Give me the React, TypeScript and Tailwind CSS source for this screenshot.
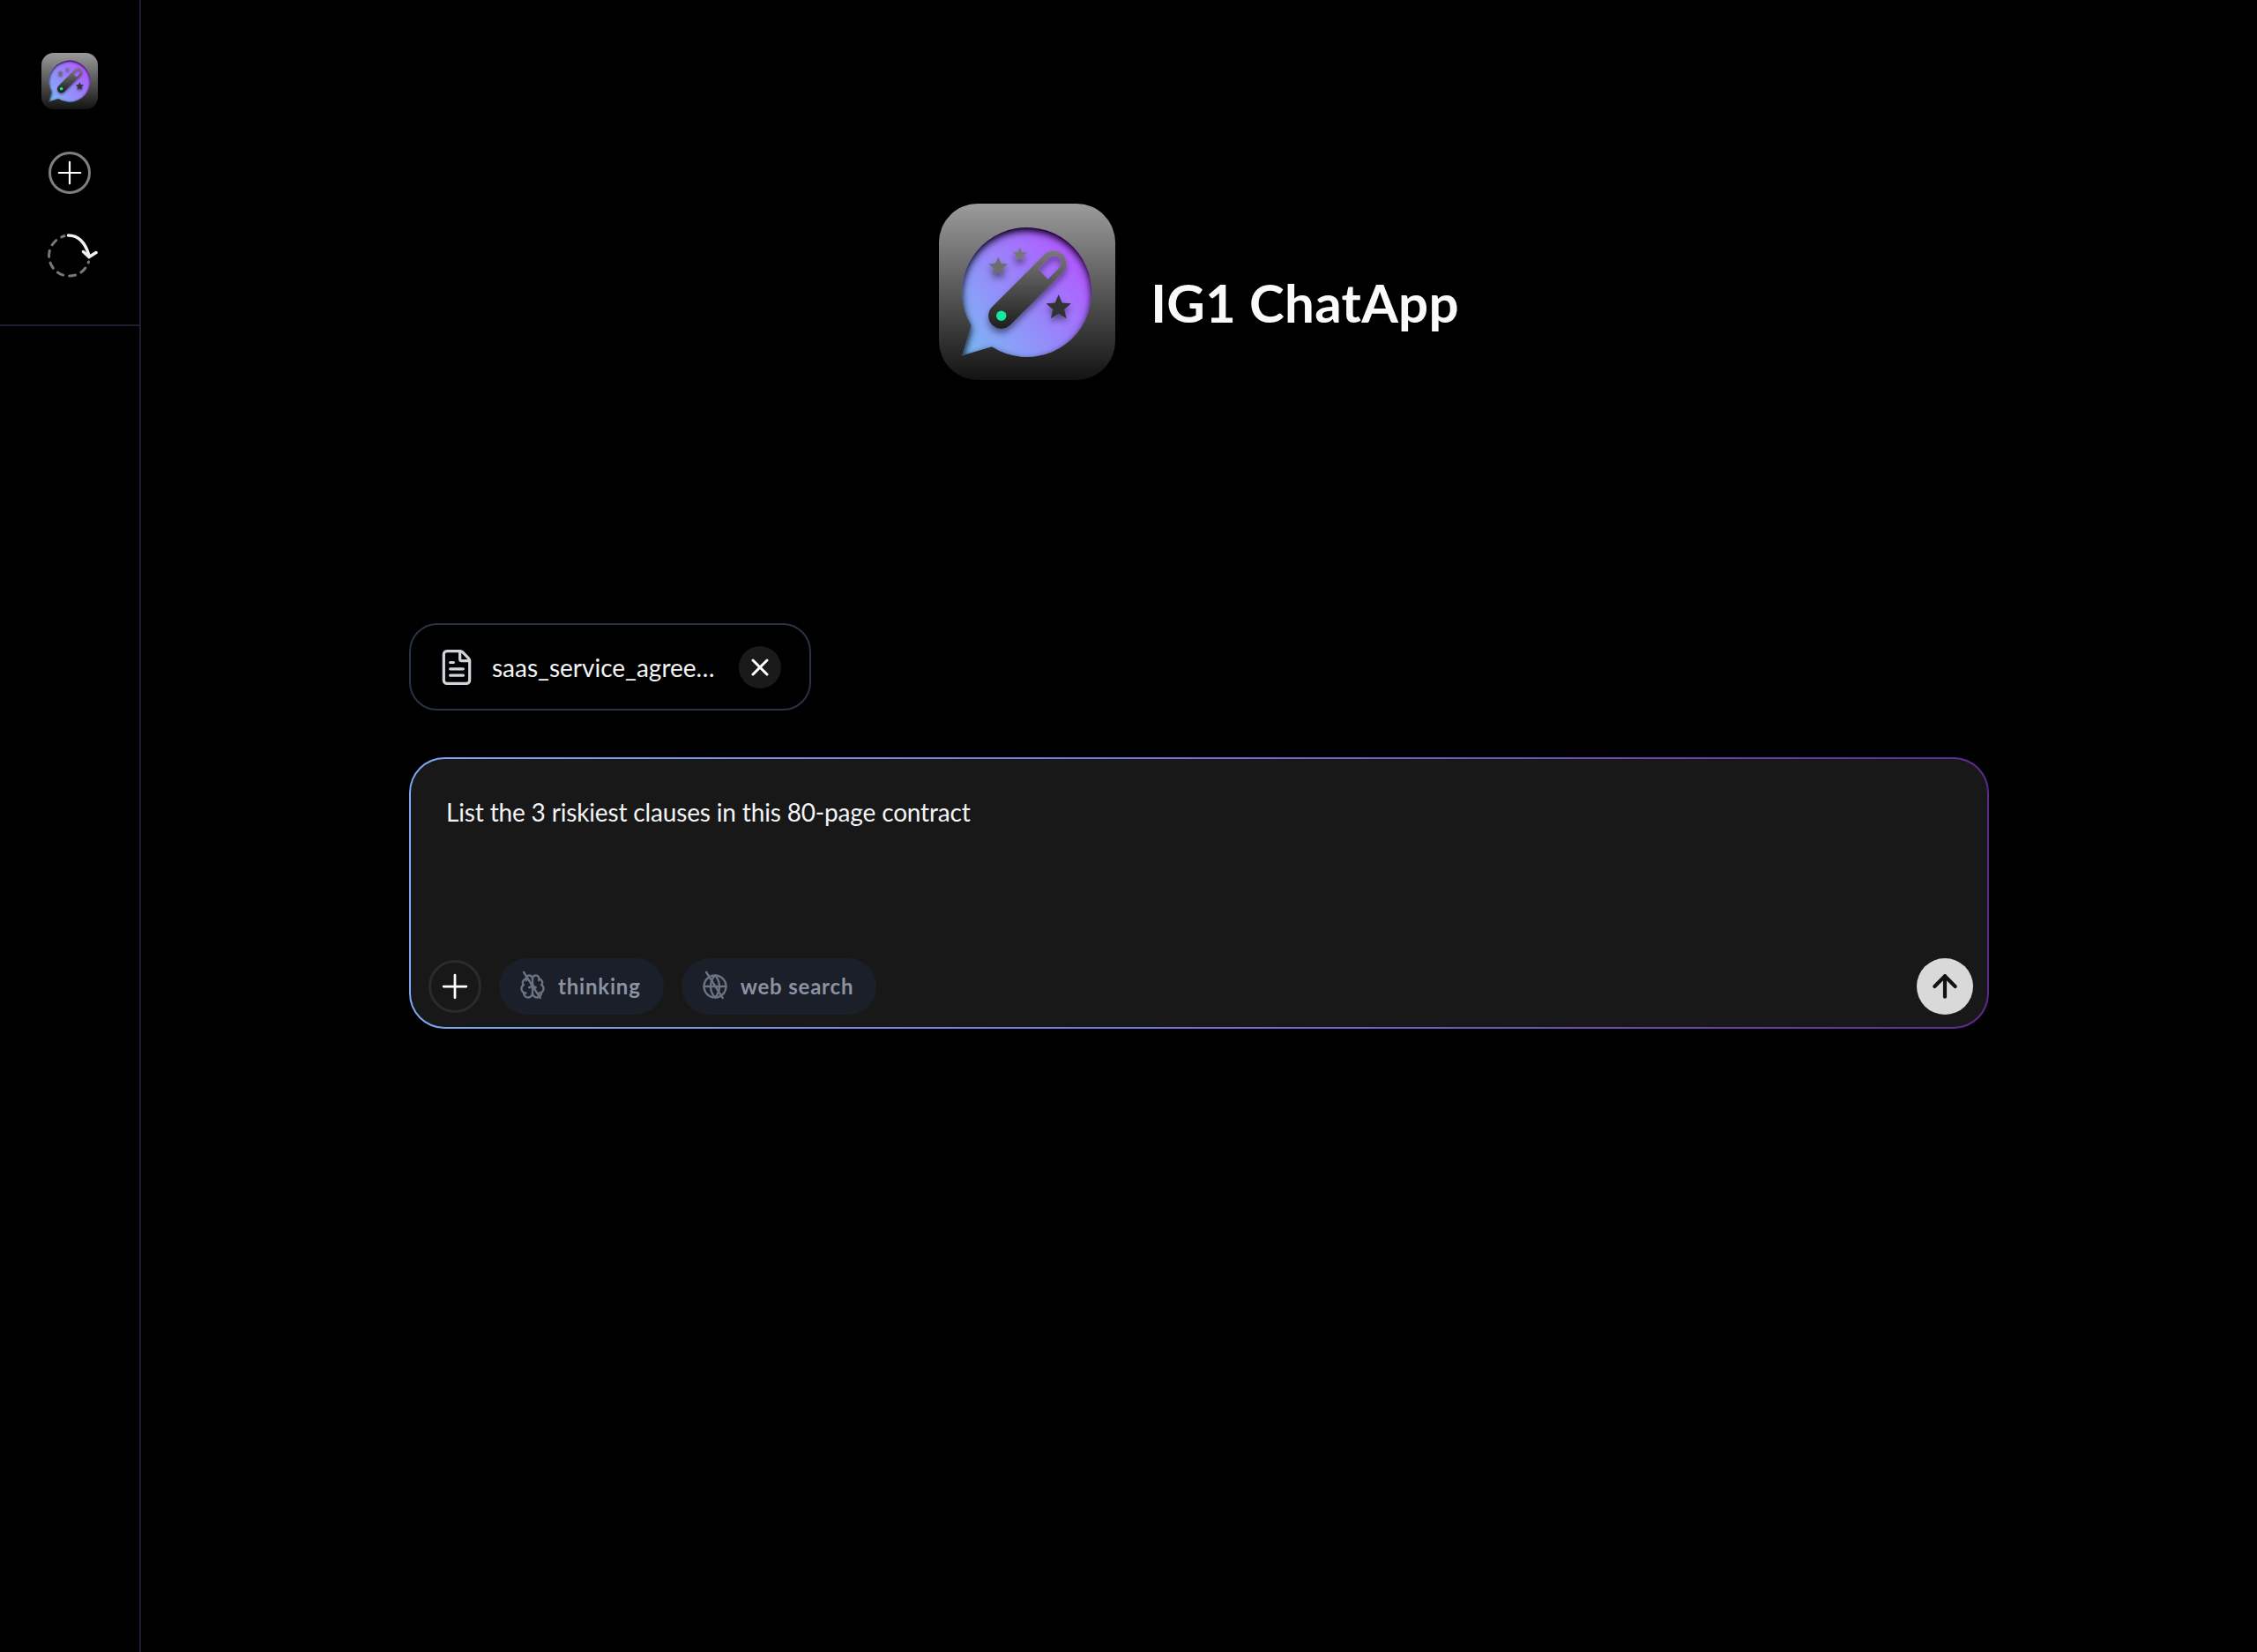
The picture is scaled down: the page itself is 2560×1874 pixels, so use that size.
import { ArrowUp, Brain, FileText, Globe, Plus, X } from 'lucide-react'

const star = (cx: number, cy: number, r: number) => {
  const pts = []
  for (let i = 0; i < 10; i++) {
    const rad = i % 2 === 0 ? r : r * 0.45
    const a = (Math.PI / 5) * i - Math.PI / 2
    pts.push(`${(cx + rad * Math.cos(a)).toFixed(2)},${(cy + rad * Math.sin(a)).toFixed(2)}`)
  }
  return pts.join(' ')
}

const Logo = ({ id, className }: { id: string; className: string }) => (
  <svg viewBox="0 0 200 200" className={className}>
    <defs>
      <linearGradient id={`${id}-tile`} x1="0" y1="0" x2="0" y2="1">
        <stop offset="0" stopColor="#9b9b9b" />
        <stop offset="1" stopColor="#131313" />
      </linearGradient>
      <linearGradient id={`${id}-bubble`} x1="0.05" y1="0.95" x2="0.95" y2="0.2">
        <stop offset="0" stopColor="#7cb6f5" />
        <stop offset="1" stopColor="#b455ff" />
      </linearGradient>
      <linearGradient id={`${id}-wand`} gradientUnits="userSpaceOnUse" x1="0" y1="50" x2="0" y2="142">
        <stop offset="0" stopColor="#7d7d7d" />
        <stop offset="1" stopColor="#1e1e1e" />
      </linearGradient>
      <filter id={`${id}-inner`} x="-10%" y="-10%" width="120%" height="120%">
        <feFlood floodColor="#000" result="flood" />
        <feComposite in="flood" in2="SourceAlpha" operator="out" result="inverse" />
        <feGaussianBlur in="inverse" stdDeviation="4.5" result="blur" />
        <feOffset in="blur" dy="4" result="offset" />
        <feComposite in="offset" in2="SourceAlpha" operator="in" result="shadow" />
        <feMerge>
          <feMergeNode in="SourceGraphic" />
          <feMergeNode in="shadow" />
          <feMergeNode in="shadow" />
        </feMerge>
      </filter>
      <filter id={`${id}-drop`} x="-30%" y="-30%" width="160%" height="170%">
        <feDropShadow dx="0" dy="5" stdDeviation="3.5" floodColor="#000" floodOpacity="0.45" />
      </filter>
    </defs>
    <rect width="200" height="200" rx="44" fill={`url(#${id}-tile)`} />
    <path
      d="M36.7 138.3 L26.3 172.3 L60 162.3 A73.5 73.5 0 1 0 36.7 138.3 Z"
      fill={`url(#${id}-bubble)`}
      filter={`url(#${id}-inner)`}
    />
    <g filter={`url(#${id}-drop)`}>
      <polygon points={star(67.3, 72, 11.5)} fill="#6d6d6d" />
      <polygon points={star(91.7, 58, 8.5)} fill="#777777" />
      <polygon points={star(135.7, 118, 15)} fill="#333333" />
      <path
        fillRule="evenodd"
        d="M60.4 117 L120.8 56.8 A14.5 14.5 0 0 1 141.2 77.2 L81 137.6 A14.5 14.5 0 0 1 60.4 117 Z M112.3 74.3 L125.3 61.3 A8 8 0 0 1 136.7 72.7 L123.7 85.7 Z"
        fill={`url(#${id}-wand)`}
      />
    </g>
    <circle cx="70.7" cy="127.3" r="5.7" fill="#12e8a0" />
  </svg>
)

const HistoryIcon = () => (
  <svg viewBox="0 0 64 64" fill="none" strokeLinecap="round" strokeWidth="3" className="h-16 w-16">
    <path d="M53.5 39 A23 23 0 1 1 26 9.8" stroke="#777777" strokeDasharray="7 7" strokeDashoffset="6" />
    <path d="M30.5 9 C42 9 50 18 54 32" stroke="#f2f2f2" strokeWidth="3.5" />
    <path d="M47.5 27.5 L54 33.5 L62 28.5" stroke="#f2f2f2" strokeWidth="3.5" />
  </svg>
)

const Sidebar = () => (
  <aside className="w-[160px] shrink-0 border-r-2 border-[#1b202c]">
    <div className="flex h-[370px] flex-col items-center border-b-2 border-[#1b202c] pt-[60px]">
      <Logo id="small" className="h-16 w-16" />
      <button className="mt-12 flex h-12 w-12 items-center justify-center rounded-full border-[3px] border-[#7f7f7f] text-white">
        <Plus size={42} strokeWidth={1.25} />
      </button>
      <div className="mt-[38px]">
        <HistoryIcon />
      </div>
    </div>
  </aside>
)

const Pill = ({ icon, label }: { icon: React.ReactNode; label: string }) => (
  <button className="flex h-16 items-center gap-[14px] rounded-full bg-[#1a1f29] pl-[23px] pr-[26px] text-[24px] font-bold tracking-[0.8px] text-[#8b92a1]">
    {icon}
    {label}
  </button>
)

export default function App() {
  return (
    <div className="flex h-screen w-full bg-black font-['Lato',sans-serif] text-white">
      <Sidebar />
      <main className="flex flex-1 flex-col items-center pt-[231px]">
        <div className="flex items-center gap-10">
          <Logo id="big" className="h-[200px] w-[200px]" />
          <h1 className="mt-[23px] text-[60px] font-bold leading-none tracking-[0.3px] text-[#fafafa]">IG1 ChatApp</h1>
        </div>

        <div className="mt-[276px] w-[1792px]">
          <div className="flex h-[99px] w-[456px] items-center rounded-[32px] border-2 border-[#2a3344] pl-[30px] pr-[32px]">
            <FileText size={44} strokeWidth={1.75} className="shrink-0 text-[#d1d5db]" />
            <span className="ml-[18px] text-[28px] text-[#f3f4f6]">saas_service_agree…</span>
            <button className="ml-auto flex h-12 w-12 shrink-0 items-center justify-center rounded-full bg-[#1a1a1a] text-white">
              <X size={32} strokeWidth={2.25} />
            </button>
          </div>

          <div className="mt-[53px] rounded-[40px] bg-gradient-to-r from-[#7aa9f2] via-[#766fd0] to-[#5b2a8f] p-[2px]">
            <div className="flex h-[304px] flex-col justify-between rounded-[38px] bg-[#181818] pb-[14px] pl-5 pr-4">
              <p className="pl-5 pt-[43px] text-[28px] leading-[34px] tracking-[-0.16px] text-[#f3f4f6]">
                List the 3 riskiest clauses in this 80-page contract
              </p>
              <div className="flex items-center gap-5">
                <button className="flex h-[60px] w-[60px] items-center justify-center rounded-full border-[3px] border-[#2b2b2b] text-white">
                  <Plus size={44} strokeWidth={1.5} />
                </button>
                <Pill
                  icon={
                    <Brain size={30} strokeWidth={1.9} className="overflow-visible text-[#6b7280]">
                      <path d="M4 -1 L19 22.5" />
                    </Brain>
                  }
                  label="thinking"
                />
                <Pill
                  icon={
                    <Globe size={30} strokeWidth={1.9} className="overflow-visible text-[#6b7280]">
                      <path d="M4 -1 L19 22.5" />
                    </Globe>
                  }
                  label="web search"
                />
                <button className="ml-auto flex h-16 w-16 items-center justify-center rounded-full bg-[#d9d9d9] text-[#111111]">
                  <ArrowUp size={40} strokeWidth={2.5} />
                </button>
              </div>
            </div>
          </div>
        </div>
      </main>
    </div>
  )
}
